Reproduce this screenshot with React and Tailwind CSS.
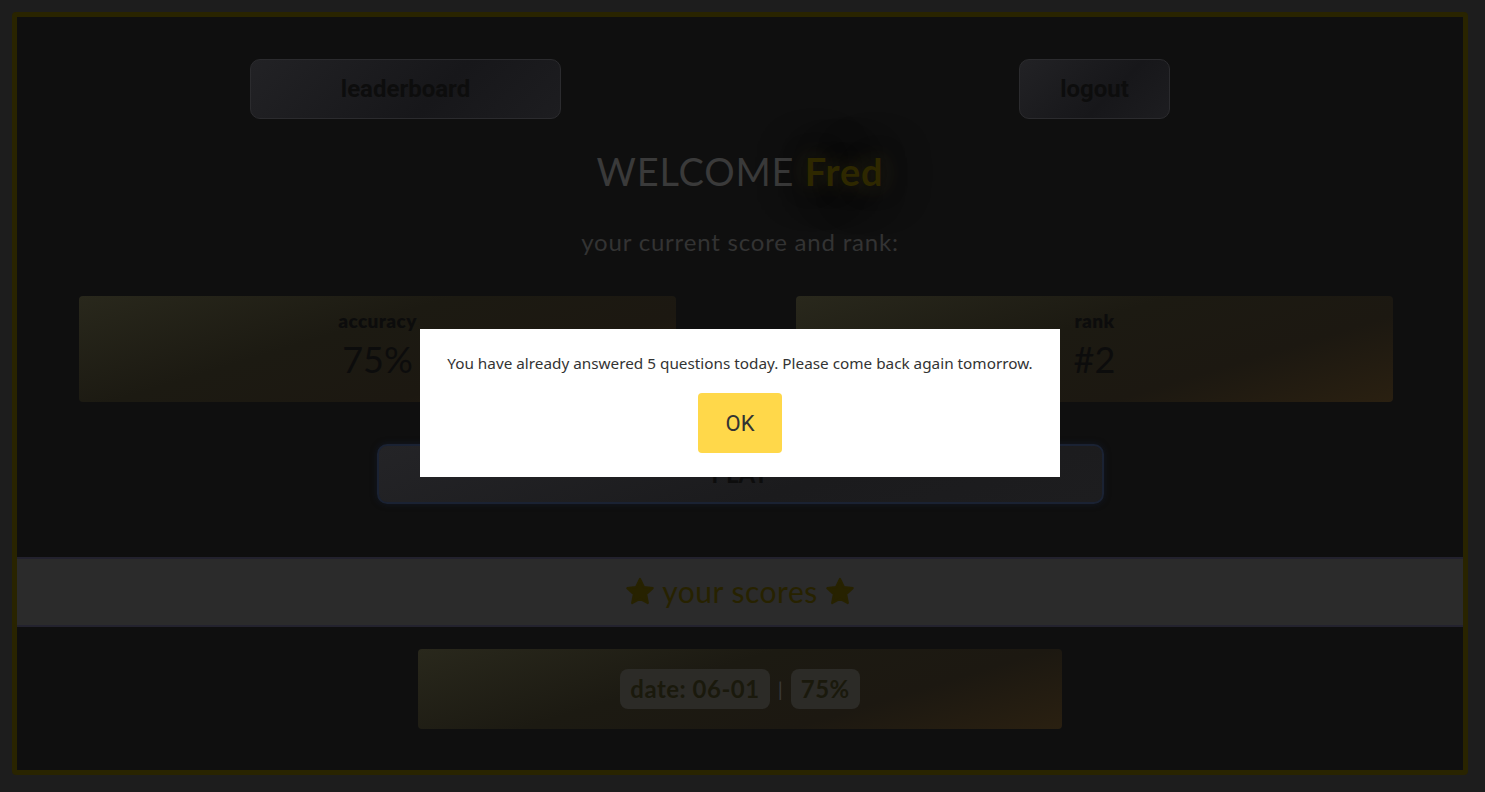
import React from 'react';

const cardBg = 'bg-[linear-gradient(163deg,#29281c_0%,#1c1a12_40%,#1c1811_70%,#2a2011_100%)]';

const StarIcon = () => (
    <svg width="32" height="32" viewBox="0 0 24 24" className="inline-block">
        <path
            d="M12 2.2l2.9 6.1 6.6.8-4.9 4.6 1.3 6.6L12 17.1l-5.9 3.2 1.3-6.6-4.9-4.6 6.6-.8z"
            fill="#272200"
            stroke="#272200"
            strokeWidth="1.6"
            strokeLinejoin="round"
        />
    </svg>
);

const StatCard = ({ label, value }) => (
    <div className={`flex-1 h-[106px] rounded-[4px] ${cardBg} flex flex-col items-center pt-[15px]`}>
        <span className="text-[19px] font-extrabold text-[#0c0c0c] leading-5 tracking-[0.4px]">{label}</span>
        <span className="mt-[8px] text-[36px] text-[#0c0c0c] leading-10">{value}</span>
    </div>
);

const App = () => {
    return (
        <div className="min-h-[792px] bg-[#1d1d1d] pl-3 pr-[17px] pt-3 font-['Lato',sans-serif]">
            <div className="h-[763px] border-[5px] border-[#292400] rounded-[4px] bg-[#0f0f0f] flex flex-col">
                {/* top buttons */}
                <div className="flex mt-[42px]">
                    <button className="ml-[233px] w-[311px] h-[60px] rounded-[10px] border border-[#2b2b2e] bg-[linear-gradient(135deg,#222225,#17171a_60%,#1d1d20)] text-[24px] font-bold text-[#0d0d0d] font-['Roboto',sans-serif]">
                        leaderboard
                    </button>
                    <button className="ml-[458px] w-[151px] h-[60px] rounded-[10px] border border-[#2b2b2e] bg-[linear-gradient(135deg,#222225,#17171a_60%,#1d1d20)] text-[24px] font-bold text-[#0d0d0d] font-['Roboto',sans-serif]">
                        logout
                    </button>
                </div>

                <h1 className="mt-[28px] text-center text-[38px] leading-[48px] tracking-[0.8px] text-[#3a3a3a]">
                    WELCOME{' '}
                    <span className="font-bold text-[#2e2800] [text-shadow:0_0_22px_rgba(62,56,22,0.55),0_0_48px_rgba(40,38,22,0.5)]">Fred</span>
                </h1>

                <p className="mt-[33px] text-center text-[24px] leading-7 tracking-[0.8px] text-[#333333]">your current score and rank:</p>

                <div className="mt-[40px] flex gap-[120px] pl-[62px] pr-[70px]">
                    <StatCard label="accuracy" value="75%" />
                    <StatCard label="rank" value="#2" />
                </div>

                <div className="mt-[42px] flex justify-center">
                    <button className="w-[727px] h-[60px] rounded-[10px] border-2 border-[#1a2233] bg-[linear-gradient(160deg,#242427,#1b1b1d_60%,#1d1d1f)] text-[24px] font-bold text-[#0d0d0d] shadow-[0_0_6px_rgba(20,30,50,0.6)]">
                        PLAY
                    </button>
                </div>

                <div className="mt-[53px] h-[70px] border-y-2 border-[#23222e] bg-[#2b2b2b] flex items-center justify-center gap-[6px]">
                    <StarIcon />
                    <span className="text-[30px] leading-8 tracking-[0.5px] text-[#272200] pb-[2px]">your scores</span>
                    <StarIcon />
                </div>

                <div className="mt-[22px] flex justify-center">
                    <div className={`w-[644px] h-[80px] rounded-[4px] ${cardBg} flex items-center justify-center gap-[8px]`}>
                        <span className="h-[40px] px-[10px] rounded-[8px] bg-[#2c2b27] flex items-center text-[24px] font-bold tracking-[0.5px] text-[#1a190c]">date: 06-01</span>
                        <span className="text-[20px] text-[#3a3a3a]">|</span>
                        <span className="h-[40px] px-[10px] rounded-[8px] bg-[#2c2b27] flex items-center text-[24px] font-bold tracking-[0.5px] text-[#1a190c]">75%</span>
                    </div>
                </div>
            </div>

            {/* modal */}
            <div className="fixed left-[420px] top-[329px] w-[640px] h-[148px] bg-white flex flex-col items-center pt-[24px]">
                <p className="text-[15.3px] leading-5 text-[#333333] font-['Noto_Sans',sans-serif]">
                    You have already answered 5 questions today. Please come back again tomorrow.
                </p>
                <button className="mt-[20px] w-[84px] h-[60px] rounded-[4px] bg-[#ffd84a] text-[22px] text-[#333333] font-['Roboto',sans-serif]">
                    OK
                </button>
            </div>
        </div>
    );
};

export default App;
